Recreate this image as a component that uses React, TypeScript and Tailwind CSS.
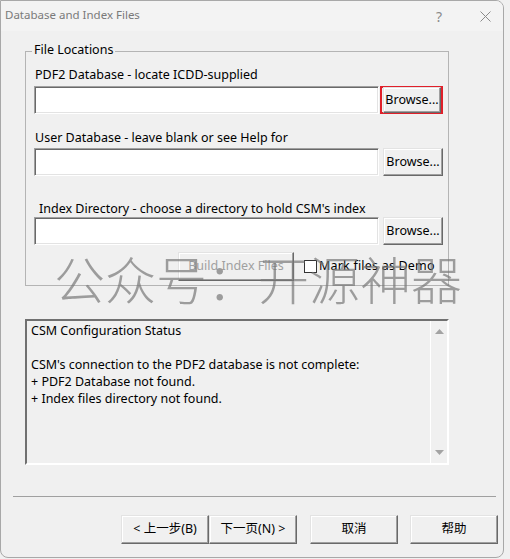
import React from 'react';

const font = '"Noto Sans", "Noto Sans CJK SC", sans-serif';

// classic raised button
const Btn: React.FC<{ label: string; className?: string; disabled?: boolean }> = ({ label, className = '', disabled }) => (
  <button
    className={`flex items-center justify-center bg-[#f0f0f0] border border-t-[#e3e3e3] border-l-[#e3e3e3] border-r-[#696969] border-b-[#696969] shadow-[inset_-1px_-1px_0_#a0a0a0,inset_1px_1px_0_#ffffff] text-[12.5px] ${disabled ? 'text-[#a0a0a0]' : 'text-black'} ${className}`}
  >
    {label}
  </button>
);

// sunken white edit box
const Field: React.FC<{ className?: string }> = ({ className = '' }) => (
  <div className={`bg-white border border-t-[#a0a0a0] border-l-[#a0a0a0] border-r-[#ffffff] border-b-[#ffffff] shadow-[inset_1px_1px_0_#696969,inset_-1px_-1px_0_#e3e3e3] ${className}`} />
);

const Row: React.FC<{ highlight?: boolean }> = ({ highlight }) => (
  <div className="flex ml-[8px] h-[28px]">
    <Field className="w-[345px] h-[28px]" />
    <div className={`ml-[1px] h-[28px] w-[63px] flex items-center justify-center ${highlight ? 'border-2 border-[#e0202a]' : ''}`}>
      <Btn label="Browse..." className={highlight ? 'w-[58px] h-[26px] ml-[1px]' : 'w-[60px] h-[28px] ml-[3px]'} />
    </div>
  </div>
);

export default function App() {
  return (
    <div className="w-[510px] h-[559px] bg-[#f0f0f0] relative" style={{ fontFamily: font }}>
      <div className="w-[504px] h-[558px] rounded-r-[8px] rounded-bl-[8px] border border-[#a8a8a8] bg-[#f0f0f0] relative overflow-hidden">
        {/* Title bar */}
        <div className="h-[30px] bg-[#f3f3f3] flex items-center text-[11.5px] text-[#7a7a7a]">
          <span className="ml-[4px] -mt-[2px]">Database and Index Files</span>
          <span className="ml-auto mr-[38px] text-[14px] text-[#8a8a8a]">?</span>
          <svg width="11" height="11" viewBox="0 0 11 11" className="mr-[12px]">
            <path d="M0.5 0.5 L10.5 10.5 M10.5 0.5 L0.5 10.5" stroke="#8a8a8a" strokeWidth="1" />
          </svg>
        </div>

        {/* Group box */}
        <div className="ml-[24px] mt-[20px] w-[424px] h-[235px] border border-[#b4b4b4] relative">
          <span className="absolute -top-[10px] left-[6px] px-[2px] bg-[#f0f0f0] text-[12.5px] leading-[16px] text-black">File Locations</span>
          <div className="mt-[15px] ml-[9px] text-[12.5px] leading-[16px] text-black">PDF2 Database - locate ICDD-supplied</div>
          <div className="mt-[3px]">
            <Row highlight />
          </div>
          <div className="mt-[16px] ml-[9px] text-[12.5px] leading-[16px] text-black">User Database - leave blank or see Help for</div>
          <div className="mt-[2px]">
            <Row />
          </div>
          <div className="mt-[25px] ml-[13px] text-[12.5px] leading-[16px] text-black">Index Directory - choose a directory to hold CSM's index</div>
          <div className="mt-[0px]">
            <Row />
          </div>
          <div className="flex items-center mt-[7px]">
            <Btn label="Build Index Files" disabled className="ml-[152px] w-[116px] h-[29px]" />
            <div className="ml-[10px] w-[13px] h-[13px] bg-white border border-[#333]" />
            <span className="ml-[2px] text-[12.5px] text-black tracking-[0.2px]">Mark files as Demo</span>
          </div>
        </div>

        {/* Status box */}
        <div className="ml-[24px] mt-[33px] w-[424px] h-[146px] flex border-2 border-t-[#707070] border-l-[#707070] border-r-[#ffffff] border-b-[#ffffff]">
          <div className="flex-1 pl-[4px] pt-[1px] text-[12.5px] leading-[17px] text-black">
            <div>CSM Configuration Status</div>
            <div>&nbsp;</div>
            <div>CSM's connection to the PDF2 database is not complete:</div>
            <div>+ PDF2 Database not found.</div>
            <div>+ Index files directory not found.</div>
          </div>
          <div className="w-[17px] border-l border-white flex flex-col items-center justify-between py-[8px]">
            <svg width="9" height="5" viewBox="0 0 9 5"><path d="M0 5 L4.5 0 L9 5 Z" fill="#a3a3a3" /></svg>
            <svg width="9" height="5" viewBox="0 0 9 5"><path d="M0 0 L4.5 5 L9 0 Z" fill="#a3a3a3" /></svg>
          </div>
        </div>

        {/* Separator */}
        <div className="ml-[12px] mt-[31px] w-[483px] h-[1px] bg-[#a0a0a0]" />

        {/* Buttons */}
        <div className="flex mt-[18px]">
          <Btn label="< 上一步(B)" className="ml-[120px] w-[88px] h-[29px]" />
          <Btn label="下一页(N) >" className="w-[88px] h-[29px]" />
          <Btn label="取消" className="ml-[13px] w-[88px] h-[29px]" />
          <Btn label="帮助" className="ml-[12px] w-[88px] h-[29px]" />
        </div>

        {/* Watermark overlay */}
        <div className="absolute left-[53px] top-[252px] text-[51px] leading-none text-[rgba(120,120,120,0.7)] pointer-events-none whitespace-nowrap" style={{ fontFamily: '"Noto Sans CJK SC", sans-serif', fontWeight: 300 }}>
          公众号：开源神器
        </div>
      </div>
    </div>
  );
}
